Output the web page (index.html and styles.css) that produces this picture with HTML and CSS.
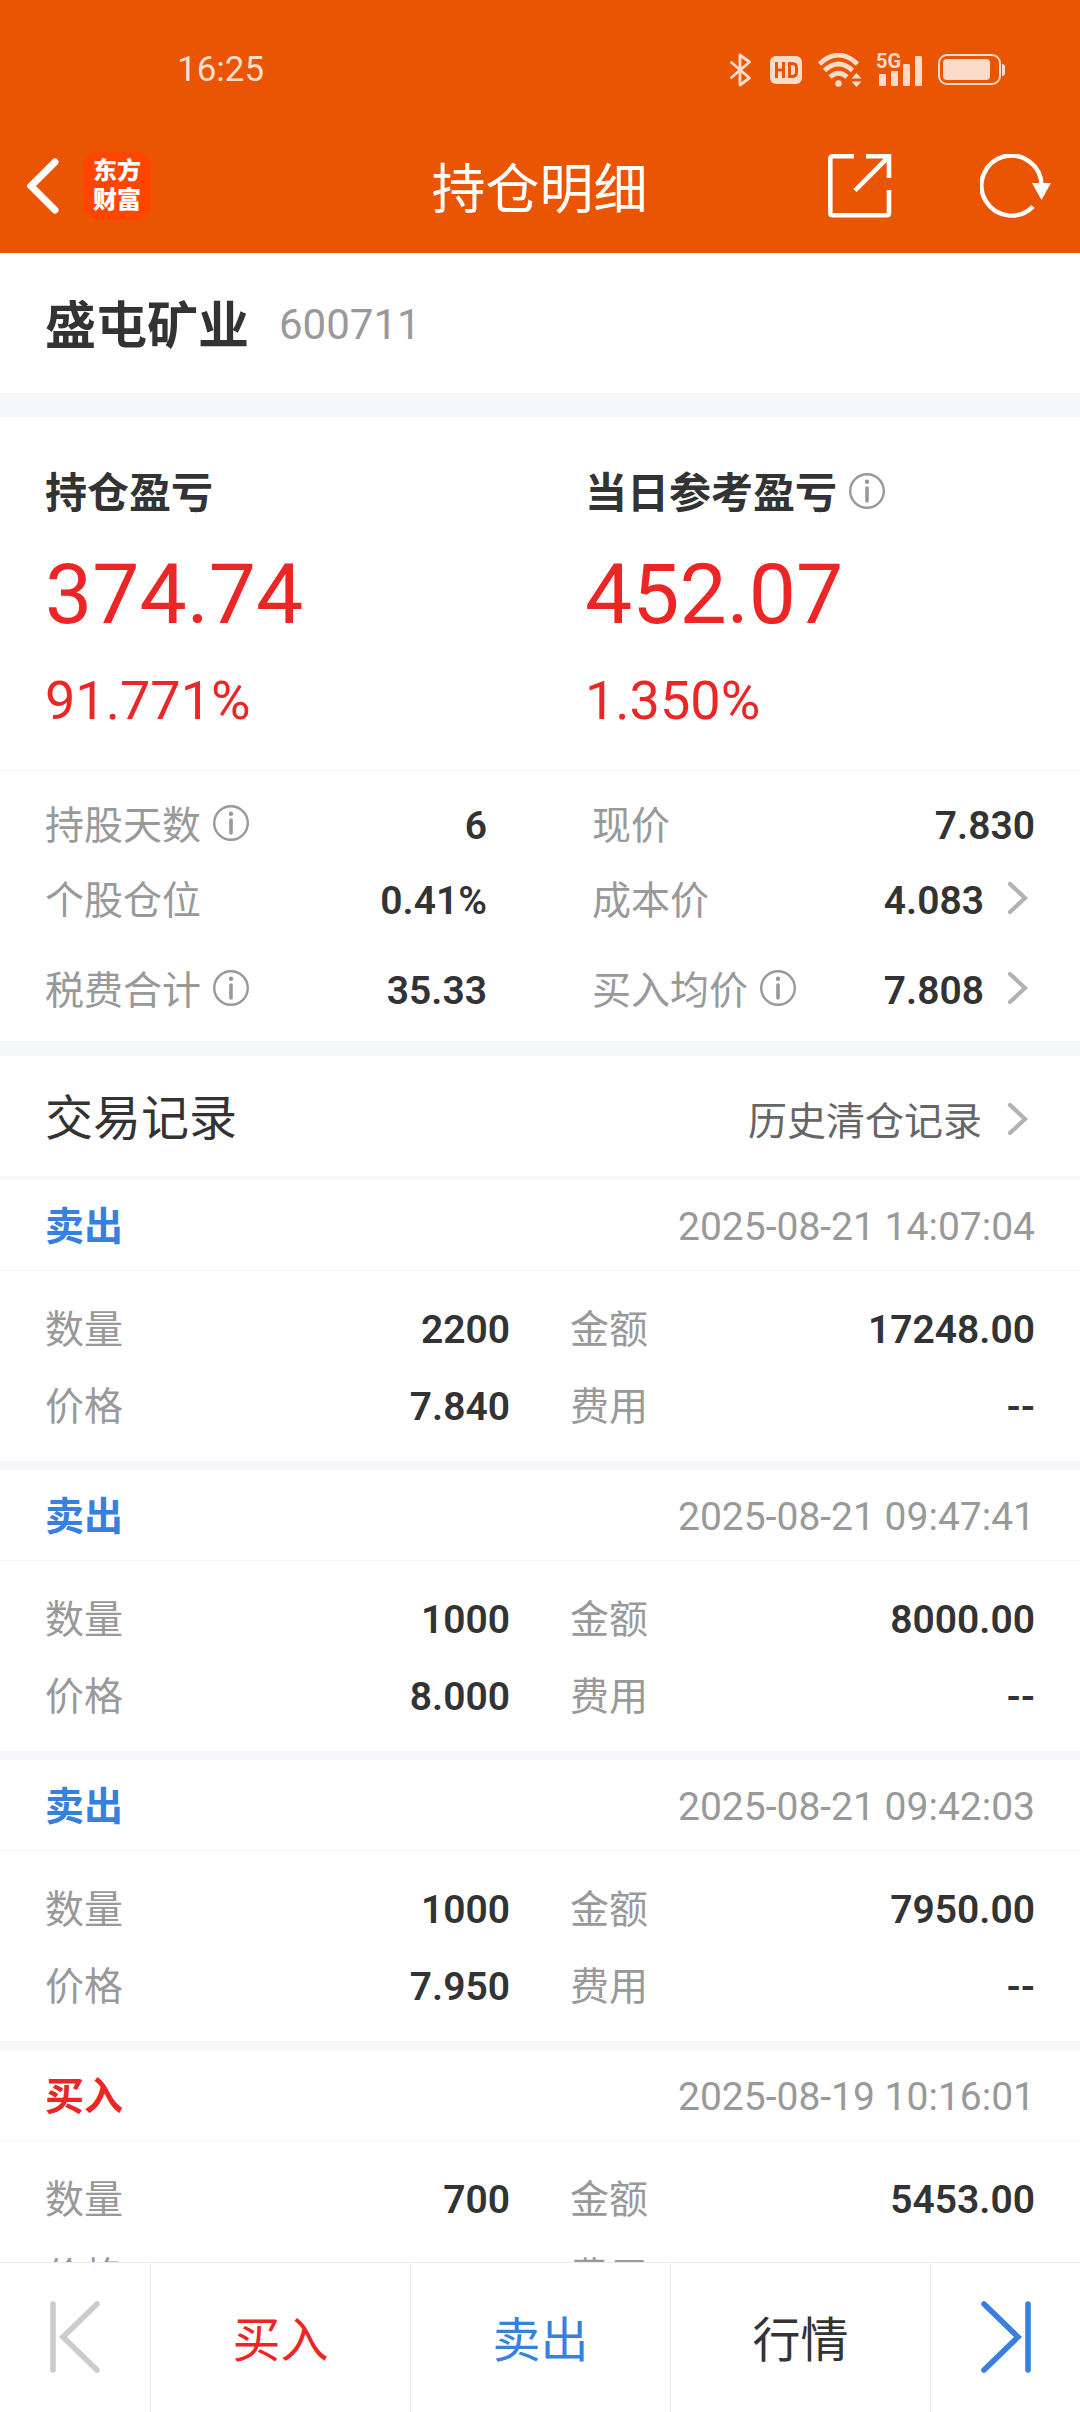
FILE: index.html
```html
<!DOCTYPE html>
<html lang="zh-CN">
<head>
<meta charset="utf-8">
<meta name="viewport" content="width=device-width, initial-scale=1">
<title>持仓明细</title>
<link rel="stylesheet" href="styles.css">
</head>
<body>
<svg class="sprite" aria-hidden="true">
  <symbol id="info" viewBox="0 0 36 36">
    <circle cx="18" cy="18" r="16.8" fill="none" stroke="currentColor" stroke-width="2.4"/>
    <circle cx="18" cy="8.8" r="2.2" fill="currentColor"/>
    <path d="M18 15v13" fill="none" stroke="currentColor" stroke-width="3.6" stroke-linecap="round"/>
  </symbol>
  <symbol id="chevron" viewBox="0 0 28 34">
    <path d="M3 3l15 14L3 31" fill="none" stroke="currentColor" stroke-width="4.2" stroke-linecap="round" stroke-linejoin="miter"/>
  </symbol>
</svg>

<header class="top">
  <div class="status">
    <time class="clock">16:25</time>
    <div class="status-icons">
      <svg width="22" height="34" viewBox="0 0 22 34" fill="none" stroke="currentColor" stroke-width="2.8" stroke-linejoin="round" stroke-linecap="round"><path d="M1.500 9.500L19.500 25 10 32V2l9.500 7L1.500 24.500"/></svg>
      <svg class="hd" width="32" height="28" viewBox="0 0 32 28"><rect width="32" height="28" rx="6" fill="currentColor"/><path d="M6.500 6v16M13.500 6v16M6.500 14h7" stroke="#ea5504" stroke-width="3" fill="none"/><path d="M19.500 7.500v13h2.500q4.500 0 4.500-4.500v-4q0-4.500-4.500-4.500z" stroke="#ea5504" stroke-width="3" fill="none"/></svg>
      <svg class="wifi" width="44" height="34" viewBox="0 0 44 34"><g fill="none" stroke="currentColor" stroke-width="4.6"><path d="M1.500 11q19-18 38 0"/><path d="M6.500 17.500q14-13 28 0"/><path d="M12 24q8.500-7.500 17 0"/></g><circle cx="20.500" cy="30.500" r="3.200" fill="currentColor"/><path d="M33.500 25.500l5-5.500 5 5.500zM33.500 28.500l5 5.500 5-5.500z" fill="currentColor"/></svg>
      <svg class="signal" width="46" height="34" viewBox="0 0 46 34"><text x="0" y="15" class="net-label">5G</text><g fill="currentColor"><rect x="3" y="21" width="7" height="12" rx="1"/><rect x="15" y="18" width="7" height="15" rx="1"/><rect x="27" y="11" width="7" height="22" rx="1"/><rect x="39" y="3" width="7" height="30" rx="1"/></g></svg>
      <svg width="67" height="32" viewBox="0 0 67 32"><rect x="1" y="1" width="61" height="29" rx="8" fill="none" stroke="currentColor" stroke-width="2"/><rect x="5" y="5" width="47" height="21" rx="4" fill="currentColor"/><path d="M64 10q3 0 3 3v6q0 3-3 3z" fill="currentColor"/></svg>
    </div>
  </div>
  <nav class="nav">
    <div class="nav-left">
      <button class="icon-btn" aria-label="返回"><svg width="32" height="56" viewBox="0 0 32 56"><path d="M28 4L4 28l24 24" fill="none" stroke="currentColor" stroke-width="7" stroke-linecap="round"/></svg></button>
      <a class="logo" href="#"><span>东方</span><span>财富</span></a>
    </div>
    <h1 class="title">持仓明细</h1>
    <div class="nav-right">
      <button class="icon-btn" aria-label="分享"><svg width="64" height="64" viewBox="0 0 64 64" fill="none" stroke="currentColor" stroke-width="4.600"><path d="M26 2.300H5Q2.300 2.300 2.300 5v54q0 2.300 2.700 2.300h53.500q2.500 0 2.500-2.300V36"/><path d="M38 2.300h23V24M61 2.300L27 36.500"/></svg></button>
      <button class="icon-btn" aria-label="刷新"><svg width="72" height="64" viewBox="0 0 72 64"><path d="M61.500 31A30 30 0 1 0 53 52.500" fill="none" stroke="currentColor" stroke-width="4.400"/><path d="M52 29h19L61.500 46z" fill="currentColor"/></svg></button>
    </div>
  </nav>
</header>

<main class="content">
  <section class="stock">
    <h2 class="stock-name">盛屯矿业</h2>
    <span class="stock-code">600711</span>
  </section>

  <section class="pnl">
    <div class="pnl-col">
      <h3 class="pnl-title">持仓盈亏</h3>
      <p class="pnl-amount">374.74</p>
      <p class="pnl-rate">91.771%</p>
    </div>
    <div class="pnl-col">
      <h3 class="pnl-title">当日参考盈亏<button class="info" aria-label="说明"><svg><use href="#info"/></svg></button></h3>
      <p class="pnl-amount">452.07</p>
      <p class="pnl-rate">1.350%</p>
    </div>
  </section>

  <section class="stats">
    <dl class="stats-col">
      <div class="row"><dt>持股天数<button class="info" aria-label="说明"><svg><use href="#info"/></svg></button></dt><dd>6</dd></div>
      <div class="row"><dt>个股仓位</dt><dd>0.41%</dd></div>
      <div class="row"><dt>税费合计<button class="info" aria-label="说明"><svg><use href="#info"/></svg></button></dt><dd>35.33</dd></div>
    </dl>
    <dl class="stats-col">
      <div class="row"><dt>现价</dt><dd>7.830</dd></div>
      <div class="row"><dt>成本价</dt><dd><a href="#">4.083<svg class="chevron"><use href="#chevron"/></svg></a></dd></div>
      <div class="row"><dt>买入均价<button class="info" aria-label="说明"><svg><use href="#info"/></svg></button></dt><dd><a href="#">7.808<svg class="chevron"><use href="#chevron"/></svg></a></dd></div>
    </dl>
  </section>

  <section class="records">
    <header class="records-head">
      <h2>交易记录</h2>
      <a class="history" href="#">历史清仓记录<svg class="chevron"><use href="#chevron"/></svg></a>
    </header>

    <article class="record">
      <header class="record-head"><h3 class="sell">卖出</h3><time>2025-08-21 14:07:04</time></header>
      <dl class="record-body">
        <div class="row"><dt>数量</dt><dd>2200</dd></div>
        <div class="row"><dt>金额</dt><dd>17248.00</dd></div>
        <div class="row"><dt>价格</dt><dd>7.840</dd></div>
        <div class="row"><dt>费用</dt><dd>--</dd></div>
      </dl>
    </article>

    <article class="record">
      <header class="record-head"><h3 class="sell">卖出</h3><time>2025-08-21 09:47:41</time></header>
      <dl class="record-body">
        <div class="row"><dt>数量</dt><dd>1000</dd></div>
        <div class="row"><dt>金额</dt><dd>8000.00</dd></div>
        <div class="row"><dt>价格</dt><dd>8.000</dd></div>
        <div class="row"><dt>费用</dt><dd>--</dd></div>
      </dl>
    </article>

    <article class="record">
      <header class="record-head"><h3 class="sell">卖出</h3><time>2025-08-21 09:42:03</time></header>
      <dl class="record-body">
        <div class="row"><dt>数量</dt><dd>1000</dd></div>
        <div class="row"><dt>金额</dt><dd>7950.00</dd></div>
        <div class="row"><dt>价格</dt><dd>7.950</dd></div>
        <div class="row"><dt>费用</dt><dd>--</dd></div>
      </dl>
    </article>

    <article class="record">
      <header class="record-head"><h3 class="buy">买入</h3><time>2025-08-19 10:16:01</time></header>
      <dl class="record-body">
        <div class="row"><dt>数量</dt><dd>700</dd></div>
        <div class="row"><dt>金额</dt><dd>5453.00</dd></div>
        <div class="row"><dt>价格</dt><dd>7.790</dd></div>
        <div class="row"><dt>费用</dt><dd>--</dd></div>
      </dl>
    </article>
  </section>
</main>

<footer class="actions">
  <button class="step prev" aria-label="上一只" disabled><svg width="52" height="72" viewBox="0 0 52 72"><path d="M4 3v66M48 3L14 36l34 33" fill="none" stroke="currentColor" stroke-width="5.600" stroke-linecap="round"/></svg></button>
  <button class="action buy">买入</button>
  <button class="action sell">卖出</button>
  <button class="action">行情</button>
  <button class="step next" aria-label="下一只"><svg width="52" height="72" viewBox="0 0 52 72"><path d="M48 3v66M4 3l34 33L4 69" fill="none" stroke="currentColor" stroke-width="5.600" stroke-linecap="round"/></svg></button>
</footer>
</body>
</html>
```
FILE: styles.css
```css
:root {
  --orange: #ea5504;
  --text: #333;
  --muted: #999;
  --red: #ec2626;
  --blue: #3880de;
  --band: #f6f7fa;
  --gutter: 45px;
}

* {
  box-sizing: border-box;
  margin: 0;
  padding: 0;
}

body {
  display: flex;
  flex-direction: column;
  height: 100vh;
  background: #fff;
  color: var(--text);
  font-family: Roboto, "Noto Sans CJK SC", sans-serif;
  font-size: 39px;
  line-height: 60px;
}

button {
  border: 0;
  background: none;
  color: inherit;
  font: inherit;
}

a {
  color: inherit;
  text-decoration: none;
}

svg {
  display: block;
}

.sprite {
  display: none;
}

.buy {
  color: var(--red);
}

.sell {
  color: var(--blue);
}

/* Status bar and title bar */

.top {
  flex: none;
  background: var(--orange);
  color: #fff;
}

.status {
  display: flex;
  justify-content: space-between;
  align-items: center;
  height: 118px;
  padding: 22px 75px 0 177px;
  color: #fbdccb;
}

.clock {
  font-size: 35px;
}

.status-icons {
  display: flex;
  align-items: center;
  gap: 16px;
}

.hd {
  margin-left: 2px;
}

.wifi {
  margin-right: -2px;
}

.signal {
  overflow: visible;
}

.net-label {
  font-family: "Liberation Sans Narrow", Roboto, sans-serif;
  font-size: 20px;
  font-weight: 700;
  fill: currentColor;
}

.nav {
  display: grid;
  grid-template-columns: 1fr auto 1fr;
  align-items: center;
  height: 135px;
  padding: 0 28px 0 27px;
}

.nav-left,
.nav-right {
  display: flex;
  align-items: center;
}

.nav-left {
  gap: 24px;
}

.nav-right {
  justify-content: flex-end;
  gap: 88px;
}

.logo {
  display: flex;
  flex-direction: column;
  align-items: center;
  justify-content: center;
  width: 68px;
  height: 68px;
  border-radius: 15px;
  background: #ff4500;
  font-size: 24px;
  font-weight: 900;
  line-height: 29px;
}

.title {
  padding-top: 10px;
  font-size: 54px;
  font-weight: 400;
}

/* Stock name */

.content {
  flex: 1;
  min-height: 0;
  overflow-y: auto;
  scrollbar-width: none;
}

.stock {
  display: flex;
  align-items: center;
  gap: 30px;
  height: 140px;
  padding: 8px var(--gutter) 0;
}

.stock-name {
  font-size: 51px;
}

.stock-code {
  padding-bottom: 4px;
  color: var(--muted);
  font-size: 42px;
}

/* Profit and loss */

.pnl {
  display: grid;
  grid-template-columns: 1fr 1fr;
  border-top: 24px solid var(--band);
  border-bottom: 1px solid var(--band);
}

.pnl-col {
  padding: 47px 0 39px var(--gutter);
}

.pnl-title {
  display: flex;
  align-items: center;
  font-size: 42px;
}

.pnl-amount {
  margin: 21px 0 26px;
  color: var(--red);
  font-size: 84px;
  line-height: 100px;
}

.pnl-rate {
  color: var(--red);
  font-size: 54px;
}

.info {
  margin: 0 0 6px 12px;
  color: var(--muted);
}

.info svg {
  width: 36px;
  height: 36px;
}

.chevron {
  width: 28px;
  height: 34px;
  margin: 0 0 6px 23px;
  color: #b2b2b2;
}

/* Label and value rows */

.row {
  display: flex;
  align-items: center;
  justify-content: space-between;
}

.row dt {
  display: flex;
  align-items: center;
  color: var(--muted);
}

.row dd {
  font-weight: 600;
}

.row a,
.history {
  display: flex;
  align-items: center;
}

.stats {
  display: grid;
  grid-template-columns: 1fr 1fr;
  padding: 17px 0 13px;
  border-bottom: 15px solid var(--band);
}

.stats-col {
  padding: 0 53px 0 var(--gutter);
}

.stats-col + .stats-col {
  padding: 0 var(--gutter) 0 52px;
}

.stats .row {
  height: 75px;
}

.stats .row:last-child {
  margin-top: 15px;
}

/* Trade records */

.records-head {
  display: flex;
  align-items: baseline;
  justify-content: space-between;
  height: 124px;
  padding: 33px var(--gutter) 0;
  border-bottom: 4px solid var(--band);
}

.records-head h2 {
  font-size: 48px;
  font-weight: 400;
}

.history {
  color: #666;
}

.history .chevron {
  margin-left: 25px;
}

.record {
  border-bottom: 9px solid var(--band);
}

.record-head {
  display: flex;
  align-items: center;
  justify-content: space-between;
  height: 91px;
  padding: 3px var(--gutter) 0;
  border-bottom: 1px solid var(--band);
}

.record-head h3 {
  font-size: 39px;
}

.record-head time {
  color: var(--muted);
}

.record-body {
  display: grid;
  grid-template-columns: 1fr 1fr;
  column-gap: 60px;
  padding: 20px var(--gutter) 16px;
}

.record-body .row {
  height: 77px;
}

/* Bottom actions */

.actions {
  flex: none;
  display: grid;
  grid-template-columns: 15fr 26fr 26fr 26fr 15fr;
  height: 150px;
  border-top: 1px solid #ebebeb;
  background: #fff;
}

.actions button + button {
  border-left: 1px solid #ebebeb;
}

.action {
  padding-top: 6px;
  font-size: 48px;
}

.step {
  display: flex;
  align-items: center;
  justify-content: center;
  padding-bottom: 2px;
}

.prev {
  color: #ccc;
}

.next {
  color: var(--blue);
}
```
